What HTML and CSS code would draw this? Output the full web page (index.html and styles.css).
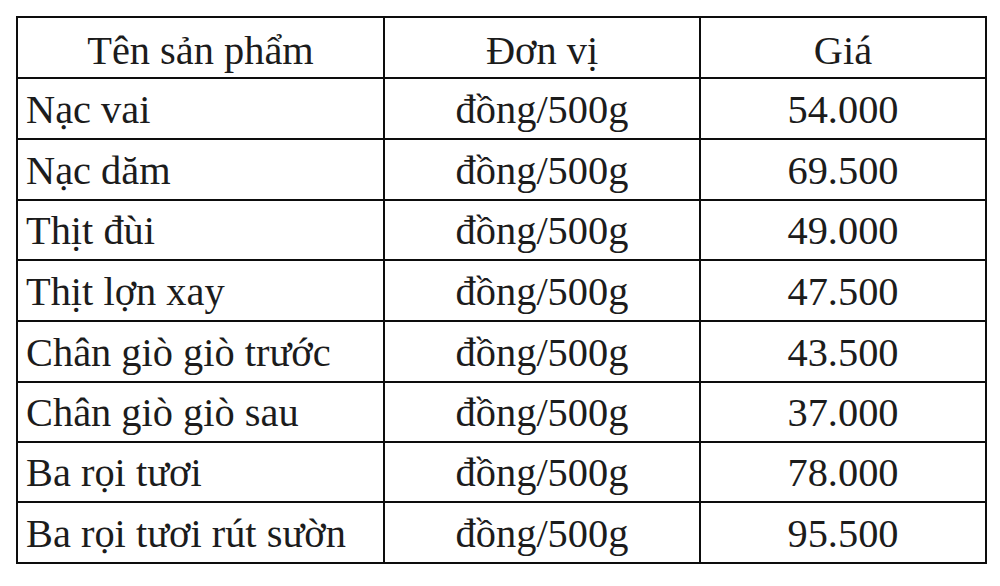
FILE: index.html
```html
<!DOCTYPE html>
<html lang="vi">
<head>
<meta charset="utf-8">
<title>Bảng giá thịt lợn</title>
<link rel="stylesheet" href="styles.css">
</head>
<body>
<div class="price-table">
  <div class="cell head">Tên sản phẩm</div>
  <div class="cell head">Đơn vị</div>
  <div class="cell head">Giá</div>

  <div class="cell name">Nạc vai</div>
  <div class="cell">đồng/500g</div>
  <div class="cell">54.000</div>

  <div class="cell name">Nạc dăm</div>
  <div class="cell">đồng/500g</div>
  <div class="cell">69.500</div>

  <div class="cell name">Thịt đùi</div>
  <div class="cell">đồng/500g</div>
  <div class="cell">49.000</div>

  <div class="cell name">Thịt lợn xay</div>
  <div class="cell">đồng/500g</div>
  <div class="cell">47.500</div>

  <div class="cell name">Chân giò giò trước</div>
  <div class="cell">đồng/500g</div>
  <div class="cell">43.500</div>

  <div class="cell name">Chân giò giò sau</div>
  <div class="cell">đồng/500g</div>
  <div class="cell">37.000</div>

  <div class="cell name">Ba rọi tươi</div>
  <div class="cell">đồng/500g</div>
  <div class="cell">78.000</div>

  <div class="cell name">Ba rọi tươi rút sườn</div>
  <div class="cell">đồng/500g</div>
  <div class="cell">95.500</div>
</div>
</body>
</html>
```

FILE: styles.css
```css
html, body {
  margin: 0;
  padding: 0;
  background: #ffffff;
}

body {
  padding: 16px 0 0 16px;
  font-family: "Liberation Serif", "Times New Roman", serif;
}

.price-table {
  display: grid;
  width: 971px;
  box-sizing: border-box;
  grid-template-columns: 365px 314px 284px;
  grid-template-rows: 59px 59px 59px 58px 59px 59px 58px 58px 59px;
  gap: 2px;
  padding: 2px;
  background: #0d0d0d;
}

.cell {
  background: #ffffff;
  color: #1c1c1c;
  font-size: 40.4px;
  line-height: 46px;
  display: flex;
  align-items: center;
  justify-content: center;
  padding-top: 2px;
  white-space: nowrap;
}

.cell.head {
  padding-top: 6px;
}

.cell.name {
  justify-content: flex-start;
  padding-left: 8px;
}
```
